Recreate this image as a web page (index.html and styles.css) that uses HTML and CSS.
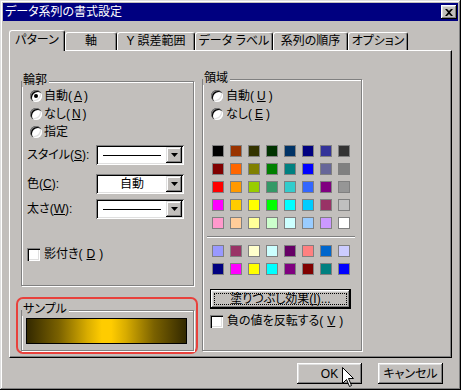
FILE: index.html
```html
<!DOCTYPE html>
<html lang="ja">
<head>
    <meta charset="UTF-8">
    <meta name="viewport" content="width=device-width, initial-scale=1.0">
    <title>データ系列の書式設定</title>
    <link rel="stylesheet" href="styles.css">
</head>
<body>
    <div class="window">
        <div class="titlebar">
            <span class="title">データ系列の書式設定</span>
            <button class="close-btn">
                <svg width="8" height="7" viewBox="0 0 8 7"><path d="M0 0h2l2 2 2-2h2L5 3.5 8 7H6L4 5 2 7H0l3-3.5z" fill="#000"/></svg>
            </button>
        </div>

        <!-- Tabs -->
        <div class="tabs">
            <div class="tab active tab-pattern">パターン</div>
            <div class="tab tab-axis">軸</div>
            <div class="tab tab-error">Y 誤差範囲</div>
            <div class="tab tab-label">データ ラベル</div>
            <div class="tab tab-order">系列の順序</div>
            <div class="tab tab-option">オプション</div>
        </div>

        <div class="panel">
            <div class="col-left">
                <!-- Border -->
                <div class="group outline">
                    <span class="group-label">輪郭</span>
                    <div class="radio-row"><span class="radio checked"></span>自動(<u>A</u>)</div>
                    <div class="radio-row"><span class="radio"></span>なし(<u>N</u>)</div>
                    <div class="radio-row"><span class="radio"></span>指定</div>

                    <div class="field-row row-style">
                        <span class="field-label">スタイル(<u>S</u>):</span>
                        <div class="combo">
                            <span class="combo-value"><span class="line-sample"></span></span>
                            <span class="combo-btn"><svg width="7" height="4" viewBox="0 0 7 4"><path d="M0 0h7L3.5 4z" fill="#000"/></svg></span>
                        </div>
                    </div>
                    <div class="field-row row-color">
                        <span class="field-label">色(<u>C</u>):</span>
                        <div class="combo">
                            <span class="combo-value">自動</span>
                            <span class="combo-btn"><svg width="7" height="4" viewBox="0 0 7 4"><path d="M0 0h7L3.5 4z" fill="#000"/></svg></span>
                        </div>
                    </div>
                    <div class="field-row row-weight">
                        <span class="field-label">太さ(<u>W</u>):</span>
                        <div class="combo">
                            <span class="combo-value"><span class="line-sample"></span></span>
                            <span class="combo-btn"><svg width="7" height="4" viewBox="0 0 7 4"><path d="M0 0h7L3.5 4z" fill="#000"/></svg></span>
                        </div>
                    </div>

                    <div class="check-row shadow-row"><span class="checkbox"></span>影付き(<u>D</u>)</div>
                </div>

                <!-- Sample -->
                <div class="sample-frame">
                    <div class="group sample">
                        <span class="group-label">サンプル</span>
                        <div class="sample-bar"></div>
                    </div>
                </div>
            </div>

            <!-- Area -->
            <div class="group area">
                <span class="group-label">領域</span>
                <div class="radio-row"><span class="radio"></span>自動(<u>U</u>)</div>
                <div class="radio-row"><span class="radio"></span>なし(<u>E</u>)</div>

                <div class="swatches">
                    <span class="swatch" style="background:#000000"></span>
                    <span class="swatch" style="background:#993300"></span>
                    <span class="swatch" style="background:#333300"></span>
                    <span class="swatch" style="background:#003300"></span>
                    <span class="swatch" style="background:#003366"></span>
                    <span class="swatch" style="background:#000080"></span>
                    <span class="swatch" style="background:#333399"></span>
                    <span class="swatch" style="background:#333333"></span>
                    <span class="swatch" style="background:#800000"></span>
                    <span class="swatch" style="background:#ff6600"></span>
                    <span class="swatch" style="background:#808000"></span>
                    <span class="swatch" style="background:#008000"></span>
                    <span class="swatch" style="background:#008080"></span>
                    <span class="swatch" style="background:#0000ff"></span>
                    <span class="swatch" style="background:#666699"></span>
                    <span class="swatch" style="background:#808080"></span>
                    <span class="swatch" style="background:#ff0000"></span>
                    <span class="swatch" style="background:#ff9900"></span>
                    <span class="swatch" style="background:#99cc00"></span>
                    <span class="swatch" style="background:#339966"></span>
                    <span class="swatch" style="background:#33cccc"></span>
                    <span class="swatch" style="background:#3366ff"></span>
                    <span class="swatch" style="background:#800080"></span>
                    <span class="swatch" style="background:#969696"></span>
                    <span class="swatch" style="background:#ff00ff"></span>
                    <span class="swatch" style="background:#ffcc00"></span>
                    <span class="swatch" style="background:#ffff00"></span>
                    <span class="swatch" style="background:#00ff00"></span>
                    <span class="swatch" style="background:#00ffff"></span>
                    <span class="swatch" style="background:#00ccff"></span>
                    <span class="swatch" style="background:#993366"></span>
                    <span class="swatch" style="background:#c0c0c0"></span>
                    <span class="swatch" style="background:#ff99cc"></span>
                    <span class="swatch" style="background:#ffcc99"></span>
                    <span class="swatch" style="background:#ffff99"></span>
                    <span class="swatch" style="background:#ccffcc"></span>
                    <span class="swatch" style="background:#ccffff"></span>
                    <span class="swatch" style="background:#99ccff"></span>
                    <span class="swatch" style="background:#cc99ff"></span>
                    <span class="swatch" style="background:#ffffff"></span>
                </div>

                <div class="separator"></div>

                <div class="swatches swatches-chart">
                    <span class="swatch" style="background:#9999ff"></span>
                    <span class="swatch" style="background:#993366"></span>
                    <span class="swatch" style="background:#ffffcc"></span>
                    <span class="swatch" style="background:#ccffff"></span>
                    <span class="swatch" style="background:#660066"></span>
                    <span class="swatch" style="background:#ff8080"></span>
                    <span class="swatch" style="background:#0066cc"></span>
                    <span class="swatch" style="background:#ccccff"></span>
                    <span class="swatch" style="background:#000080"></span>
                    <span class="swatch" style="background:#ff00ff"></span>
                    <span class="swatch" style="background:#ffff00"></span>
                    <span class="swatch" style="background:#00ffff"></span>
                    <span class="swatch" style="background:#800080"></span>
                    <span class="swatch" style="background:#800000"></span>
                    <span class="swatch" style="background:#008080"></span>
                    <span class="swatch" style="background:#0000ff"></span>
                </div>

                <button class="btn fill-btn">塗りつぶし効果(<u>I</u>)...</button>
                <div class="check-row invert-row"><span class="checkbox"></span>負の値を反転する(<u>V</u>)</div>
            </div>
        </div>

        <div class="dialog-buttons">
            <button class="btn">OK</button>
            <button class="btn">キャンセル</button>
        </div>

        <!-- Mouse pointer -->
        <svg class="cursor" width="13" height="21" viewBox="0 0 13 21">
            <path d="M0.5 0.5V16.5L4.5 12.5L7.5 19.5L9.5 18.5L6.5 11.5H11.5Z" fill="#fff" stroke="#000" stroke-width="1"/>
        </svg>
    </div>
</body>
</html>
```

FILE: styles.css
```css
* {
    box-sizing: border-box;
}

body {
    margin: 0;
    font-family: "Liberation Sans", "Noto Sans CJK JP", sans-serif;
    font-size: 12px;
    line-height: 14px;
    font-feature-settings: "palt";
    text-autospace: no-autospace;
    color: #000;
    background: #c2bfbc;
}

button {
    font: inherit;
    color: #000;
    border: none;
    padding: 0;
    background: #c2bfbc;
}

.window {
    position: relative;
    width: 461px;
    height: 390px;
    padding: 3px;
    background: #c2bfbc;
    box-shadow: inset -1px -1px #000, inset 1px 1px #dfdfdf, inset -2px -2px #808080, inset 2px 2px #fff;
    display: flex;
    flex-direction: column;
}

.titlebar {
    height: 18px;
    background: #000080;
    color: #fff;
    display: flex;
    align-items: center;
    justify-content: space-between;
    padding: 0 1px 0 2px;
}

.close-btn {
    width: 16px;
    height: 14px;
    display: flex;
    align-items: center;
    justify-content: center;
    box-shadow: inset -1px -1px #000, inset 1px 1px #fff, inset -2px -2px #808080, inset 2px 2px #dfdfdf;
}

/* Tabs */
.tabs {
    position: relative;
    z-index: 1;
    display: flex;
    align-items: flex-end;
    height: 21px;
    margin: 9px 0 -1px 6px;
}

.tab {
    height: 18px;
    margin-bottom: 1px;
    padding-top: 1px;
    display: flex;
    justify-content: center;
    background: #c2bfbc;
    border-top: 1px solid #fff;
    border-left: 1px solid #fff;
    border-right: 1px solid #000;
    border-radius: 3px 3px 0 0;
    box-shadow: inset -1px 0 #808080;
}

.tab.active {
    height: 21px;
    margin-bottom: 0;
    padding-top: 2px;
}

.tab-pattern { width: 56px; }
.tab-axis { width: 52px; }
.tab-error { width: 78px; }
.tab-label { width: 78px; }
.tab-order { width: 75px; }
.tab-option { width: 60px; }

.panel {
    width: 443px;
    height: 308px;
    margin-left: 6px;
    padding: 28px 0 0 11px;
    display: flex;
    align-items: flex-start;
    gap: 8px;
    border-top: 1px solid #fff;
    border-left: 1px solid #fff;
    border-right: 1px solid #000;
    border-bottom: 1px solid #000;
    box-shadow: inset -1px -1px #808080;
}

.col-left {
    width: 173px;
    margin-top: 2px;
}

/* Group boxes */
.group {
    position: relative;
    border: 1px solid #808080;
    box-shadow: 1px 1px 0 #fff, inset 1px 1px 0 #fff;
}

.group-label {
    position: absolute;
    top: -9px;
    left: 0;
    padding: 0 2px 0 1px;
    background: #c2bfbc;
}

.outline {
    height: 205px;
    padding: 5px 0 0 5px;
}

.area {
    width: 160px;
    height: 272px;
    padding: 7px 0 0 7px;
}

.radio-row {
    display: flex;
    align-items: center;
    gap: 2px;
    height: 18px;
    margin-left: 3px;
}

.area .radio-row {
    margin-left: 1px;
    gap: 3px;
}

.radio {
    position: relative;
    flex: none;
    width: 12px;
    height: 12px;
    border-radius: 50%;
    background: #fff;
    box-shadow: inset 1px 1px 0 #808080, inset 2px 2px 0 #000, inset -1px -1px 0 #fff, inset -2px -2px 0 #dfdfdf;
}

.radio.checked::after {
    content: "";
    position: absolute;
    left: 4px;
    top: 4px;
    width: 4px;
    height: 4px;
    border-radius: 50%;
    background: #000;
}

.field-row {
    display: flex;
    align-items: center;
    height: 20px;
}

.row-style { margin-top: 4px; }
.row-color { margin-top: 9px; }
.row-weight { margin-top: 5px; }

.field-label {
    width: 69px;
}

.combo {
    width: 88px;
    height: 20px;
    padding: 2px;
    display: flex;
    background: #fff;
    box-shadow: inset 1px 1px #808080, inset -1px -1px #fff, inset 2px 2px #000, inset -2px -2px #dfdfdf;
}

.combo-value {
    flex: 1;
    display: flex;
    align-items: center;
    justify-content: center;
}

.line-sample {
    width: 58px;
    height: 1px;
    background: #000;
}

.combo-btn {
    width: 16px;
    height: 16px;
    display: flex;
    align-items: center;
    justify-content: center;
    background: #c2bfbc;
    box-shadow: inset -1px -1px #000, inset 1px 1px #dfdfdf, inset -2px -2px #808080, inset 2px 2px #fff;
}

.check-row {
    display: flex;
    align-items: center;
    gap: 4px;
}

.shadow-row { margin-top: 28px; }
.invert-row { margin-top: 5px; }

.checkbox {
    flex: none;
    width: 13px;
    height: 13px;
    background: #fff;
    box-shadow: inset 1px 1px #808080, inset 2px 2px #000, inset -1px -1px #fff, inset -2px -2px #dfdfdf;
}

/* Sample */
.sample-frame {
    width: 182px;
    margin: 11px 0 0 -5px;
    padding: 11px 2px 1px 3px;
    border: 2px solid #e8413c;
    border-radius: 7px;
}

.sample {
    height: 41px;
    padding: 7px 0 0 4px;
}

.sample-bar {
    width: 161px;
    height: 26px;
    border: 1px solid #000;
    background: linear-gradient(to right, #332900, #7a6100 20%, #d9ad00 38%, #ffcc00 47%, #ffcc00 53%, #d9ad00 62%, #7a6100 80%, #332900);
}

/* Colour palette */
.swatches {
    display: grid;
    grid-template-columns: repeat(8, 12px);
    grid-auto-rows: 12px;
    gap: 6px;
    margin: 22px 0 0 2px;
}

.swatches-chart {
    margin-top: 7px;
}

.swatch {
    border: 1px solid #808080;
}

.separator {
    width: 148px;
    height: 2px;
    margin: 7px 0 0 -3px;
    border-top: 1px solid #808080;
    border-bottom: 1px solid #fff;
}

/* Buttons */
.btn {
    width: 65px;
    height: 21px;
    box-shadow: inset -1px -1px #000, inset 1px 1px #fff, inset -2px -2px #808080, inset 2px 2px #dfdfdf;
}

.fill-btn {
    position: relative;
    display: block;
    width: 141px;
    height: 20px;
    margin-top: 14px;
    border: 1px solid #000;
}

.fill-btn::after {
    content: "";
    position: absolute;
    inset: 3px;
    border: 1px dotted #000;
}

.dialog-buttons {
    display: flex;
    justify-content: flex-end;
    gap: 16px;
    margin: 5px 15px 0 0;
}

.cursor {
    position: absolute;
    left: 342px;
    top: 367px;
}
```
